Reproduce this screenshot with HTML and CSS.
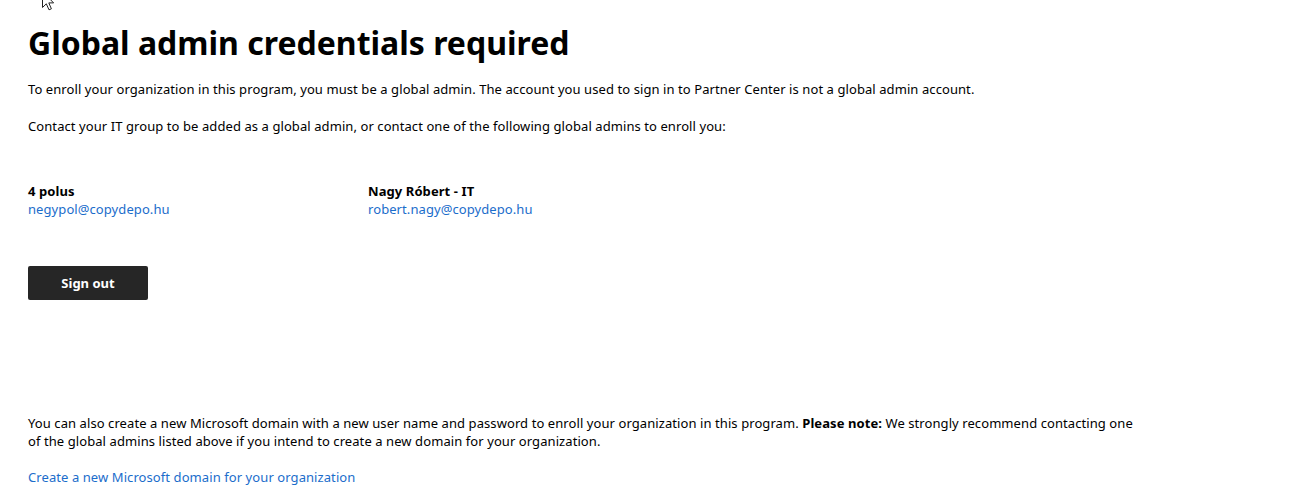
FILE: index.html
```html
<!DOCTYPE html>
<html lang="en">
<head>
<meta charset="utf-8">
<title>Global admin credentials required</title>
<link rel="stylesheet" href="styles.css">
</head>
<body>
<svg class="cursor" width="13" height="20" viewBox="0 0 13 20" aria-hidden="true"><path d="M0.5 0.5 L0.5 16.5 L4.3 12.8 L7 18.8 L9.4 17.8 L6.8 11.9 L11.6 11.9 Z" fill="#fff" stroke="#222" stroke-width="1" stroke-linejoin="miter"/></svg>
<main class="page">
  <h1 class="title">Global admin credentials required</h1>
  <p class="text intro">To enroll your organization in this program, you must be a global admin. The account you used to sign in to Partner Center is not a global admin account.</p>
  <p class="text contact">Contact your IT group to be added as a global admin, or contact one of the following global admins to enroll you:</p>
  <div class="admins">
    <div class="admin">
      <div class="admin-name">4 polus</div>
      <a class="link" href="#">negypol@copydepo.hu</a>
    </div>
    <div class="admin">
      <div class="admin-name">Nagy Róbert - IT</div>
      <a class="link" href="#">robert.nagy@copydepo.hu</a>
    </div>
  </div>
  <button class="btn">Sign out</button>
  <p class="text note">You can also create a new Microsoft domain with a new user name and password to enroll your organization in this program. <strong>Please note:</strong> We strongly recommend contacting one of the global admins listed above if you intend to create a new domain for your organization.</p>
  <a class="link create" href="#">Create a new Microsoft domain for your organization</a>
</main>
</body>
</html>
```
FILE: styles.css
```css
html, body {
  margin: 0;
  padding: 0;
  background: #fff;
}
body {
  font-family: "Noto Sans", "Open Sans", sans-serif;
  color: #000;
  font-size: 13px;
  line-height: 18px;
  letter-spacing: 0.08px;
}
.cursor {
  position: absolute;
  left: 42px;
  top: -9px;
}
.page {
  padding: 23px 28px 0;
  display: flex;
  flex-direction: column;
  align-items: flex-start;
}
.title {
  margin: 0;
  font-size: 32px;
  line-height: 40px;
  font-weight: 700;
  letter-spacing: 0;
}
.text {
  margin: 0;
}
.intro {
  margin-top: 17px;
}
.contact {
  margin-top: 19px;
}
.admins {
  margin-top: 47px;
  display: flex;
}
.admin {
  width: 340px;
  display: flex;
  flex-direction: column;
}
.admin-name {
  font-weight: 700;
}
.link {
  color: #1b6dcb;
  text-decoration: none;
}
.btn {
  margin-top: 48px;
  width: 120px;
  height: 34px;
  border: 0;
  border-radius: 2px;
  background: #262626;
  color: #fff;
  font-family: "Noto Sans", "Open Sans", sans-serif;
  font-size: 13px;
  font-weight: 700;
  padding: 0 0 1px;
  cursor: pointer;
}
.note {
  margin-top: 114px;
  width: 1110px;
}
.note strong {
  font-weight: 700;
}
.create {
  margin-top: 18px;
}
```
